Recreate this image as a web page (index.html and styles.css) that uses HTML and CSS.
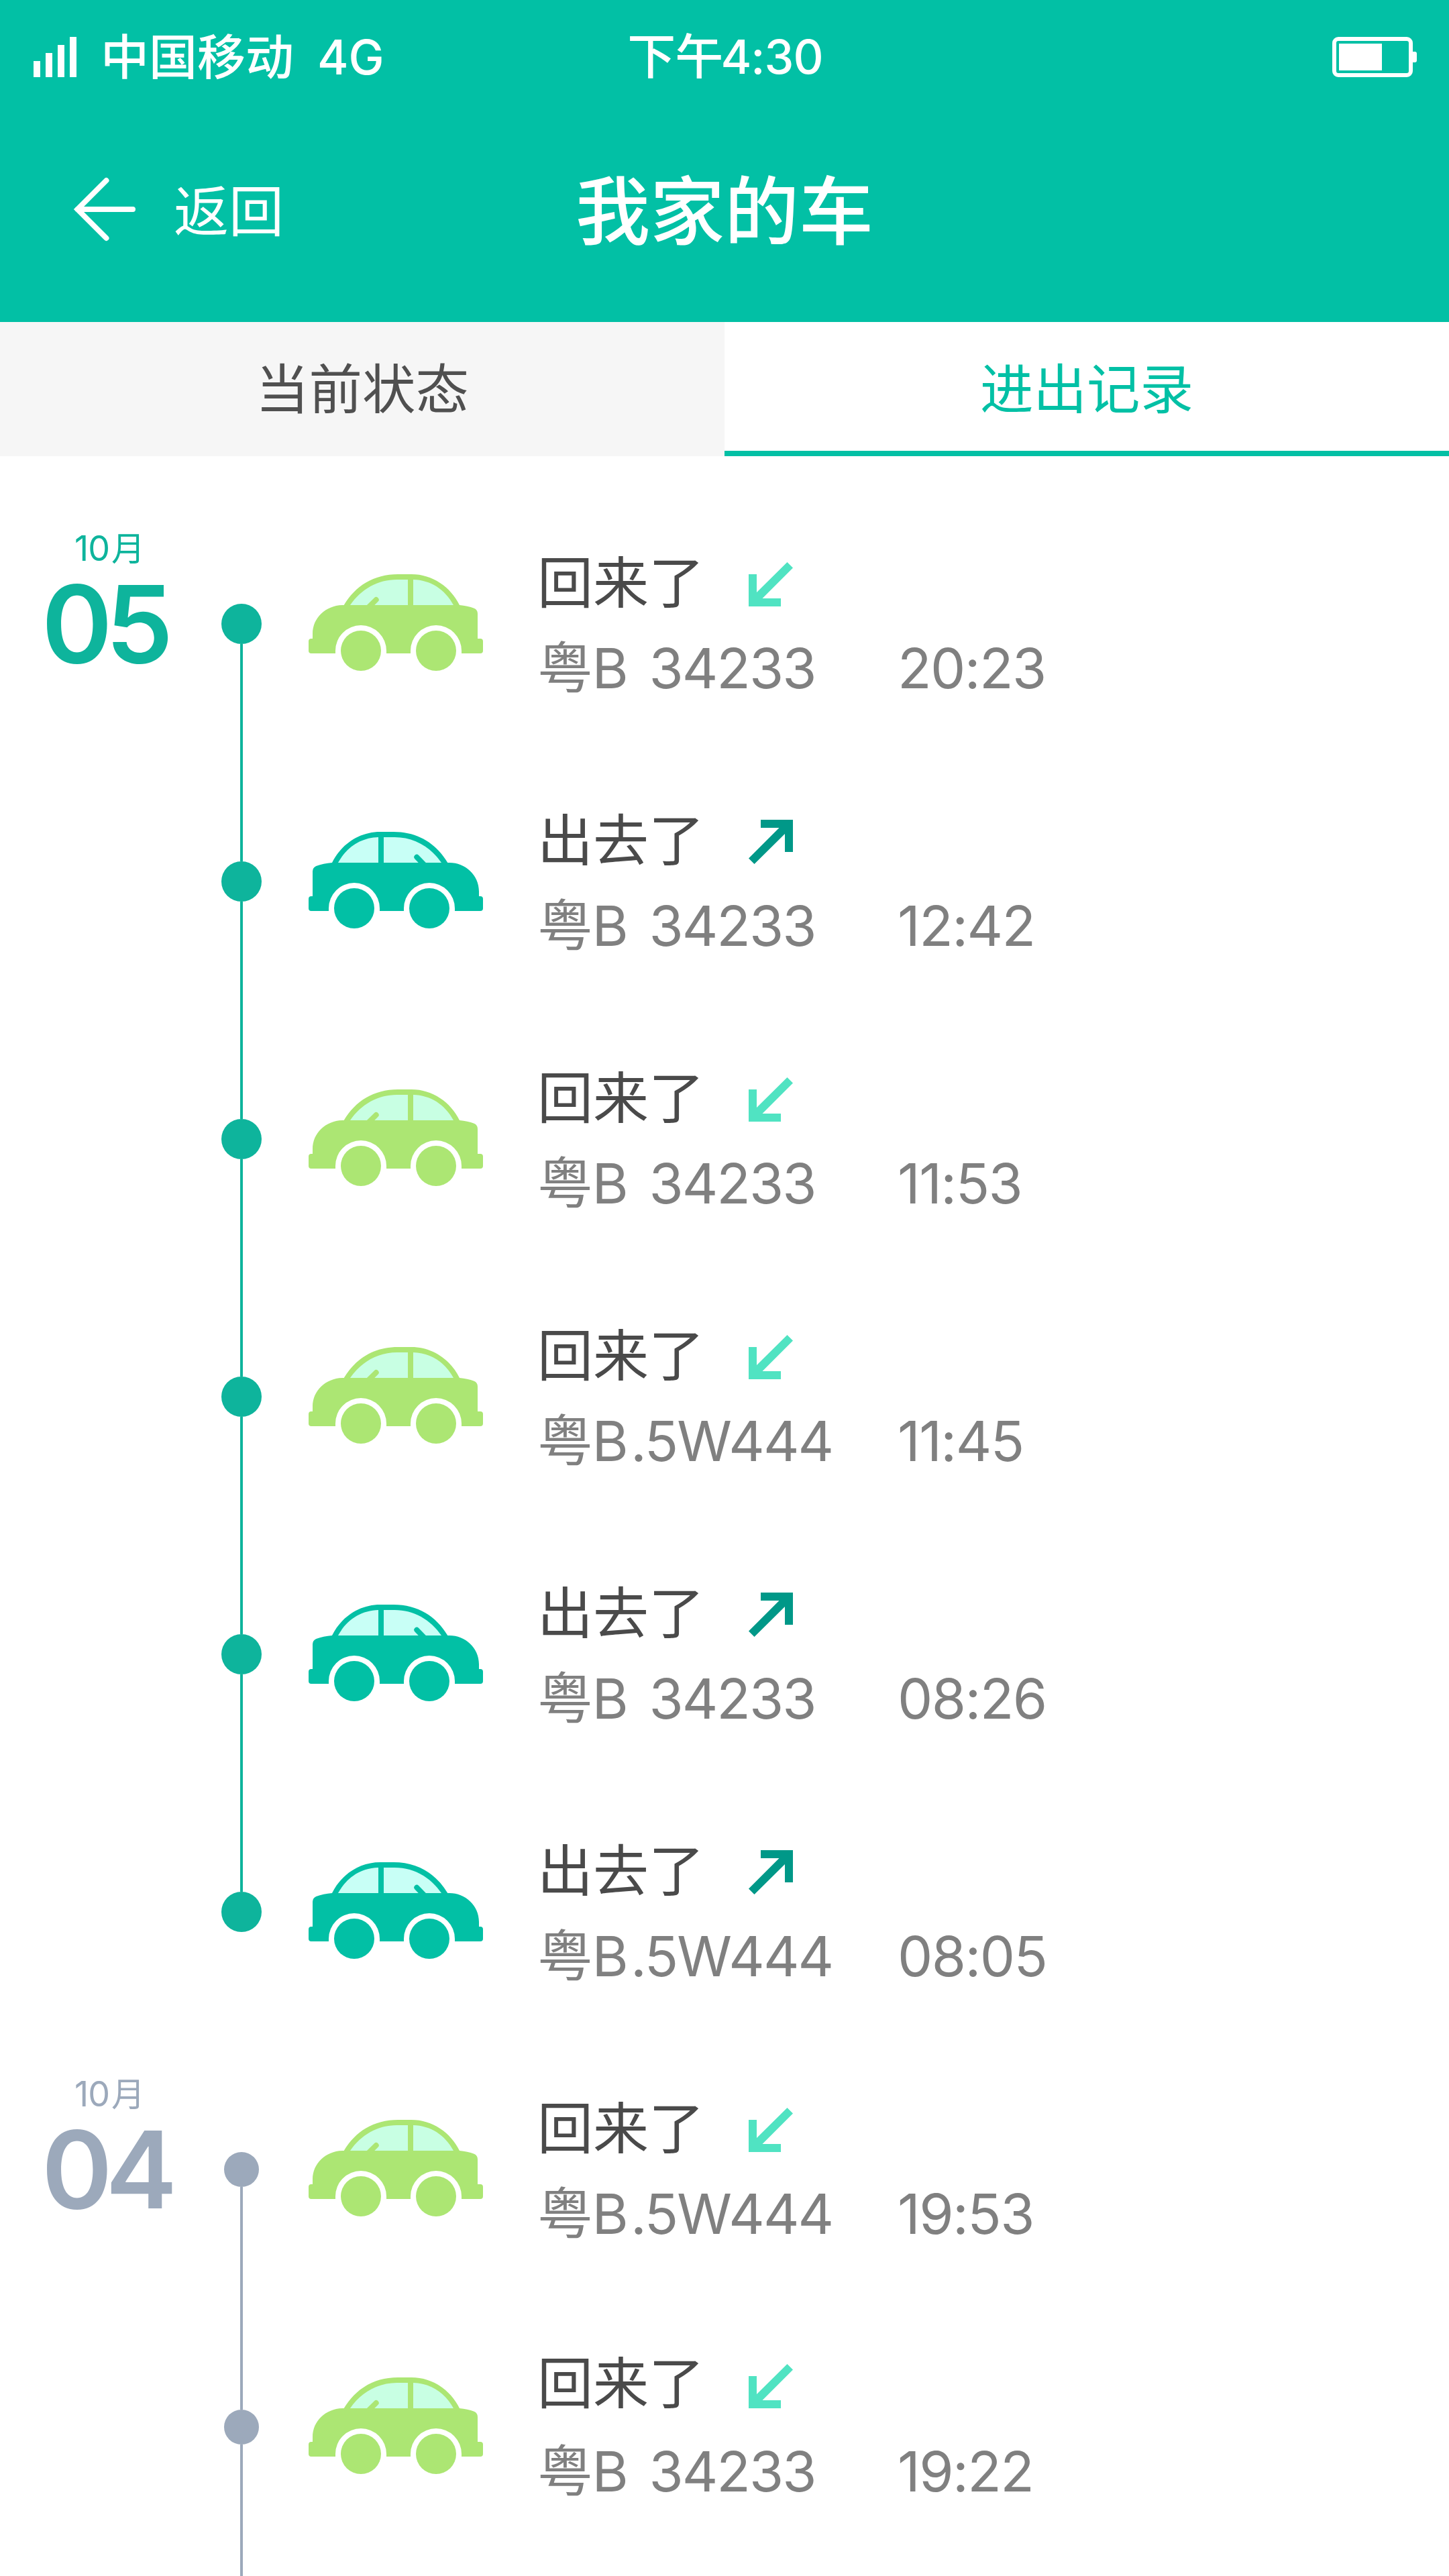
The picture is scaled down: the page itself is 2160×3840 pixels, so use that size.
FILE: index.html
```html
<!DOCTYPE html>
<html lang="zh-CN">
<head>
<meta charset="utf-8">
<title>我家的车</title>
<link rel="stylesheet" href="styles.css">
</head>
<body>
<svg class="sprite" aria-hidden="true">
  <symbol id="car" viewBox="0 0 260 144">
    <path class="car-body" d="M52.7 46C70 17.3 97 0 133.3 0H153.3C185 0 211.7 19 225 46Q237 47 246.7 50.7Q252 53 252 58.7V96H256A4 4 0 0 1 260 100V114A4 4 0 0 1 256 118H228V114A38 38 0 0 0 152 114V118H116V114A38 38 0 0 0 40 114V118H4A4 4 0 0 1 0 114V100A4 4 0 0 1 4 96H6V89C6 64 26.7 46 52 46Z"/>
    <path class="car-glass" d="M62 46C78.3 22.3 103.3 8 131.7 8H148V46ZM156 8C181.7 8.7 203.3 22.3 216 46H156Z"/>
    <path class="car-mirror" d="M100.7 38L90 48.7"/>
    <circle class="car-body" cx="78" cy="114" r="30"/>
    <circle class="car-body" cx="190" cy="114" r="30"/>
  </symbol>
  <symbol id="car-out" viewBox="0 0 260 144">
    <path class="car-body" d="M52.7 46C70 17.3 97 0 133.3 0H153.3C185 0 211.7 19 225 46Q238 47 248.7 51Q254 53.5 254 59V96H256A4 4 0 0 1 260 100V114A4 4 0 0 1 256 118H230V114A38 38 0 0 0 154 114V118H118V114A38 38 0 0 0 42 114V118H4A4 4 0 0 1 0 114V100A4 4 0 0 1 4 96H6V89C6 64 26.7 46 50 46Z"/>
    <path class="car-glass" d="M62 46C78.3 22.3 103.3 8 131.7 8H148V46ZM156 8C181.7 8.7 203.3 22.3 216 46H156Z"/>
    <path class="car-mirror" d="M98.7 37.7L88 48.7"/>
    <circle class="car-body" cx="80" cy="114" r="30"/>
    <circle class="car-body" cx="192" cy="114" r="30"/>
  </symbol>
  <symbol id="arrow" viewBox="0 0 66 66">
    <path d="M0 18H12V45L57.5 0L66 8.5L20.5 54H48V66H0Z"/>
  </symbol>
</svg>

<header class="header">
  <div class="status">
    <div class="status-left">
      <svg class="signal" width="64" height="60" viewBox="0 0 64 60"><path d="M0 36h10v24H0zM18 24h10v36H18zM36 12h10v48H36zM54 0h10v60H54z"/></svg>
      <span class="carrier">中国移动</span>
      <span class="network">4G</span>
    </div>
    <div class="clock">下午<span class="clock-digits">4:30</span></div>
    <svg class="battery" width="126" height="60" viewBox="0 0 126 60">
      <rect x="3" y="3" width="114" height="54" rx="6" fill="none" stroke="#fff" stroke-width="6"/>
      <path d="M10 10h64v40H10zM120 22h3q3 0 3 3v10q0 3-3 3h-3z"/>
    </svg>
  </div>
  <nav class="nav">
    <a class="back">
      <svg class="back-arrow" width="99" height="96" viewBox="0 0 99 96"><path d="M51.5 5L8.5 48L51.5 91M8.5 48H91"/></svg>
      <span>返回</span>
    </a>
    <h1 class="title">我家的车</h1>
  </nav>
</header>

<div class="tabs">
  <a class="tab">当前状态</a>
  <a class="tab tab-active">进出记录</a>
</div>

<main class="timeline">
  <section class="day today">
    <div class="date"><div class="month">10<span class="month-unit">月</span></div><div class="date-number">05</div></div>
    <div class="records">
      <div class="record in">
        <div class="rail"><i class="dot"></i></div>
        <svg class="car"><use href="#car"/></svg>
        <div class="info">
          <div class="action">回来了<svg class="arrow"><use href="#arrow"/></svg></div>
          <div class="detail"><span class="plate">粤B<span class="number"> 34233</span></span><span class="time">20:23</span></div>
        </div>
      </div>
      <div class="record out">
        <div class="rail"><i class="dot"></i></div>
        <svg class="car"><use href="#car-out"/></svg>
        <div class="info">
          <div class="action">出去了<svg class="arrow"><use href="#arrow"/></svg></div>
          <div class="detail"><span class="plate">粤B<span class="number"> 34233</span></span><span class="time">12:42</span></div>
        </div>
      </div>
      <div class="record in">
        <div class="rail"><i class="dot"></i></div>
        <svg class="car"><use href="#car"/></svg>
        <div class="info">
          <div class="action">回来了<svg class="arrow"><use href="#arrow"/></svg></div>
          <div class="detail"><span class="plate">粤B<span class="number"> 34233</span></span><span class="time">11:53</span></div>
        </div>
      </div>
      <div class="record in">
        <div class="rail"><i class="dot"></i></div>
        <svg class="car"><use href="#car"/></svg>
        <div class="info">
          <div class="action">回来了<svg class="arrow"><use href="#arrow"/></svg></div>
          <div class="detail"><span class="plate">粤B<span class="number">.5W444</span></span><span class="time">11:45</span></div>
        </div>
      </div>
      <div class="record out">
        <div class="rail"><i class="dot"></i></div>
        <svg class="car"><use href="#car-out"/></svg>
        <div class="info">
          <div class="action">出去了<svg class="arrow"><use href="#arrow"/></svg></div>
          <div class="detail"><span class="plate">粤B<span class="number"> 34233</span></span><span class="time">08:26</span></div>
        </div>
      </div>
      <div class="record out last">
        <div class="rail"><i class="dot"></i></div>
        <svg class="car"><use href="#car-out"/></svg>
        <div class="info">
          <div class="action">出去了<svg class="arrow"><use href="#arrow"/></svg></div>
          <div class="detail"><span class="plate">粤B<span class="number">.5W444</span></span><span class="time">08:05</span></div>
        </div>
      </div>
    </div>
  </section>

  <section class="day past">
    <div class="date"><div class="month">10<span class="month-unit">月</span></div><div class="date-number">04</div></div>
    <div class="records">
      <div class="record in">
        <div class="rail"><i class="dot"></i></div>
        <svg class="car"><use href="#car"/></svg>
        <div class="info">
          <div class="action">回来了<svg class="arrow"><use href="#arrow"/></svg></div>
          <div class="detail"><span class="plate">粤B<span class="number">.5W444</span></span><span class="time">19:53</span></div>
        </div>
      </div>
      <div class="record in raised">
        <div class="rail"><i class="dot"></i></div>
        <svg class="car"><use href="#car"/></svg>
        <div class="info">
          <div class="action">回来了<svg class="arrow"><use href="#arrow"/></svg></div>
          <div class="detail"><span class="plate">粤B<span class="number"> 34233</span></span><span class="time">19:22</span></div>
        </div>
      </div>
      <div class="rail rail-tail"></div>
    </div>
  </section>
</main>
</body>
</html>
```
FILE: styles.css
```css
* { box-sizing: border-box; }

body {
  margin: 0;
  width: 2160px;
  height: 3840px;
  display: flex;
  flex-direction: column;
  overflow: hidden;
  background: #fff;
  color: #4a4a4a;
  font-family: Inter, "Noto Sans CJK SC", sans-serif;
  font-weight: 400;
}

svg { display: block; flex: none; }
.sprite { width: 0; height: 0; position: absolute; }

/* Header */
.header {
  flex: none;
  height: 480px;
  background: #02c0a5;
  color: #fff;
}

.header svg { fill: #fff; }

.status {
  display: grid;
  grid-template-columns: 1fr auto 1fr;
  align-items: center;
  height: 168px;
  padding: 0 48px 0 50px;
  font-size: 72px;
  font-weight: 500;
  line-height: 168px;
}

.status-left { display: flex; align-items: center; }
.carrier { margin-left: 36px; }
.network { margin-left: 35px; font-size: 71px; }
.clock { letter-spacing: -1px; }
.clock-digits { margin-left: -3px; font-size: 70px; }
.battery { justify-self: end; }

.nav {
  display: grid;
  grid-template-columns: 1fr auto 1fr;
  align-items: center;
  height: 296px;
}

.back {
  display: flex;
  align-items: center;
  gap: 53px;
  padding-left: 107px;
  font-size: 82px;
  line-height: 100px;
}

.back .back-arrow {
  margin-bottom: 8px;
  fill: none;
  stroke: #fff;
  stroke-width: 8;
  stroke-linecap: round;
}

.title {
  margin: 0;
  font-size: 111px;
  font-weight: 500;
  line-height: 140px;
}

/* Tabs */
.tabs {
  flex: none;
  display: grid;
  grid-template-columns: 1fr 1fr;
  height: 200px;
}

.tab {
  background: #f6f6f6;
  color: #505050;
  font-size: 79.5px;
  line-height: 200px;
  text-align: center;
}

.tab-active {
  background: #fff;
  color: #02c0a5;
  box-shadow: inset 0 -8px #02c0a5;
}

/* Timeline */
.timeline { padding-top: 58px; }

.day {
  display: grid;
  grid-template-columns: 318px 1fr;
}

.today { --tone: #0eb49c; --dot: 60px; }
.past { --tone: #9ca9bb; --dot: 52px; }

.date {
  padding: 48px 0 0 62px;
  color: var(--tone);
}

.month {
  padding-left: 49px;
  font-size: 52px;
  line-height: 64px;
  letter-spacing: -1px;
}

.month-unit { margin-left: 3px; font-size: 50px; }

.date-number {
  font-size: 160px;
  font-weight: 570;
  line-height: 160px;
  letter-spacing: -10px;
}

.record {
  display: flex;
  align-items: center;
  height: 384px;
}

.rail {
  display: flex;
  flex-direction: column;
  align-items: center;
  align-self: stretch;
  width: 84px;
}

.rail::before,
.rail::after {
  content: "";
  flex: 1;
  width: 4px;
  background: var(--tone);
}

.record:first-child .rail::before,
.last .rail::after { background: none; }

.rail-tail { height: 30px; }

.dot {
  width: var(--dot);
  height: var(--dot);
  border-radius: 50%;
  background: var(--tone);
}

.car {
  width: 260px;
  height: 144px;
  margin: 0 81px 4px 58px;
}

.car-body { fill: var(--car); }
.car-glass { fill: var(--glass); }
.car-mirror { stroke: var(--car); stroke-width: 8; stroke-linecap: round; }

.in { --car: #ace673; --glass: #c8ffe3; --arrow: #50e3c2; }
.out { --car: #02c0a5; --glass: #c8fff6; --arrow: #009888; }
.out .car { transform: scaleX(-1); }
.out .arrow { transform: rotate(180deg); }

.info { padding-top: 5px; }

.action {
  display: flex;
  align-items: center;
  gap: 66px;
  height: 127px;
  font-size: 83px;
  line-height: 127px;
}

.arrow {
  width: 66px;
  height: 66px;
  margin-top: 3px;
  fill: var(--arrow);
}

.raised .action { margin: -4px 0 4px; }
.raised .arrow { margin-top: 7px; }

.detail {
  display: flex;
  color: #808080;
  font-size: 83px;
  line-height: 127px;
  letter-spacing: -1.6px;
}

.plate { width: 537px; white-space: pre; }
.number { margin-left: 5px; word-spacing: 6px; letter-spacing: -2px; }
```
